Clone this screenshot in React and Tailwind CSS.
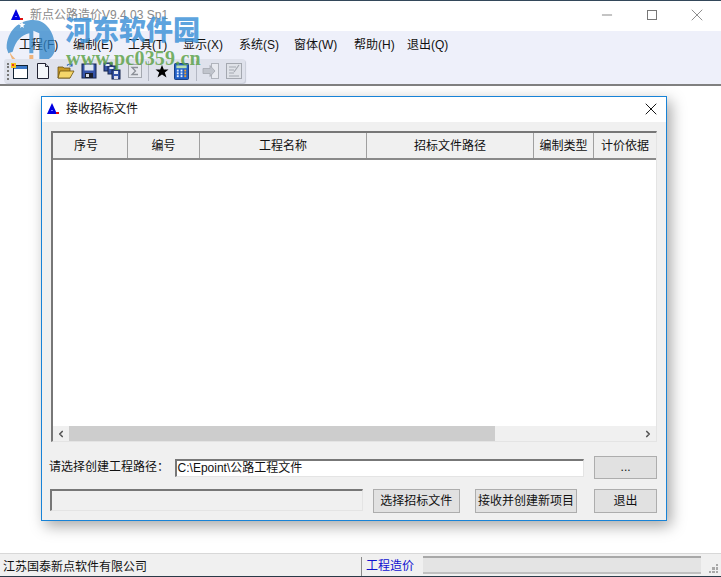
import React from "react";
import { X, Minus, ChevronLeft, ChevronRight } from "lucide-react";

const menus = ["工程(F)", "编制(E)", "工具(T)", "显示(X)", "系统(S)", "窗体(W)", "帮助(H)", "退出(Q)"];
const menuWidths = ["w-[54px]", "w-[55px]", "w-[55px]", "w-[56px]", "w-[55px]", "w-[60px]", "w-[53px]", "w-[50px]"];

const columns = [
  { title: "序号", width: "w-[75px] pr-[8px]" },
  { title: "编号", width: "w-[72px]" },
  { title: "工程名称", width: "w-[167px]" },
  { title: "招标文件路径", width: "w-[167px]" },
  { title: "编制类型", width: "w-[60px]" },
  { title: "计价依据", width: "flex-1" },
];

// App logo: the blue triangle with a small red dot
const AppIcon = ({ className }) => (
  <svg viewBox="0 0 14 14" className={className}>
    <polygon points="6,1 11,12 1,12" fill="#0000e0" />
    <rect x="10" y="10" width="3" height="2" fill="#e01010" />
    <rect x="5" y="8" width="2" height="1" fill="#8080ff" />
  </svg>
);

const NewProjectIcon = () => (
  <svg viewBox="0 0 18 18" className="w-[18px] h-[18px]">
    <rect x="2.500" y="3.500" width="14" height="13" fill="#fff" stroke="#123" />
    <rect x="3" y="4" width="13" height="3" fill="#3a78c8" />
    <rect x="0" y="1" width="5" height="5" fill="#f6c21c" />
    <rect x="1" y="2" width="2" height="2" fill="#e83a20" />
  </svg>
);

const PageIcon = () => (
  <svg viewBox="0 0 18 18" className="w-[18px] h-[18px]">
    <path d="M3.500 1.500h8l3 3v12h-11z" fill="#f4f6fa" stroke="#223" />
    <path d="M11.500 1.500v3h3" fill="#c8d0dc" stroke="#223" />
  </svg>
);

const FolderIcon = () => (
  <svg viewBox="0 0 18 18" className="w-[18px] h-[18px]">
    <path d="M1 5h5l1 1h6v10H1z" fill="#c89a28" stroke="#6b5210" strokeWidth="0.8" />
    <path d="M3 9h14l-4 7H1z" fill="#f5d66a" stroke="#6b5210" strokeWidth="0.8" />
    <path d="M10 3.500c2-2 4-2 5 0M15 1.500v2.500h-2.500" fill="none" stroke="#2a62b8" strokeWidth="1.200" />
  </svg>
);

const DiskIcon = () => (
  <svg viewBox="0 0 18 18" className="w-[18px] h-[18px]">
    <rect x="2" y="2" width="14" height="14" fill="#3554a8" stroke="#14244f" />
    <rect x="4.500" y="2.500" width="9" height="6" fill="#dfe6f2" />
    <rect x="5" y="11" width="8" height="5" fill="#1b1f2c" />
    <rect x="6" y="12" width="3" height="3" fill="#d6dbe6" />
  </svg>
);

const SaveAllIcon = () => (
  <svg viewBox="0 0 18 18" className="w-[18px] h-[18px]">
    <rect x="1" y="1" width="8" height="8" fill="#3554a8" stroke="#14244f" />
    <rect x="5" y="4" width="8" height="8" fill="#3554a8" stroke="#14244f" />
    <rect x="9" y="8" width="8" height="9" fill="#3554a8" stroke="#14244f" />
    <rect x="11" y="9" width="4" height="3" fill="#e6ebf5" />
    <rect x="11" y="14" width="4" height="3" fill="#dde" />
    <rect x="6.500" y="5" width="4" height="2" fill="#e6ebf5" />
    <rect x="2.500" y="2" width="4" height="2" fill="#e6ebf5" />
  </svg>
);

const SigmaIcon = () => (
  <svg viewBox="0 0 18 18" className="w-[18px] h-[18px]">
    <rect x="2.500" y="2.500" width="13" height="13" fill="#e6e8ee" stroke="#a4a8b0" />
    <path d="M12 5.500H6l3.500 3.500L6 12.500h6" fill="none" stroke="#8c9098" strokeWidth="1.300" />
  </svg>
);

const StarIcon = () => (
  <svg viewBox="0 0 18 18" className="w-[18px] h-[18px]">
    <polygon points="9,3 10.800,7.500 15.500,7.500 11.800,10.500 13.500,15.500 9,12.500 4.500,15.500 6.200,10.500 2.500,7.500 7.200,7.500" fill="#000" />
  </svg>
);

const CalcIcon = () => (
  <svg viewBox="0 0 16 18" className="w-[15px] h-[17px]">
    <rect x="0.500" y="0.500" width="15" height="17" rx="1" fill="#2060c8" stroke="#123a80" />
    <rect x="2.500" y="2.500" width="11" height="3" fill="#b8e0b0" />
    {[7, 10, 13].map((y) =>
      [3, 7, 11].map((x) => (
        <rect key={`${x}-${y}`} x={x} y={y} width="2" height="2" fill={x === 11 ? "#f0a030" : "#e8f0ff"} />
      ))
    )}
  </svg>
);

const ExportIcon = () => (
  <svg viewBox="0 0 18 18" className="w-[18px] h-[18px]">
    <rect x="9.500" y="1.500" width="7" height="15" fill="#e8eaf0" stroke="#b0b4bc" />
    <path d="M1 6.500h7V3.500l5 5.500-5 5.500v-3H1z" fill="#c0c4cc" stroke="#a4a8b0" strokeWidth="0.800" />
  </svg>
);

const ReportIcon = () => (
  <svg viewBox="0 0 18 18" className="w-[18px] h-[18px]">
    <rect x="1.500" y="1.500" width="15" height="15" fill="#dfe2e8" stroke="#a4a8b0" />
    <path d="M4 5h7M4 8h5M4 11h5M4 14h10M14 3L9 10" stroke="#a4a8b0" strokeWidth="1.200" fill="none" />
  </svg>
);

const ToolSep = ({ className }) => <div className={`w-px h-[20px] bg-[#b4b8c4] ${className}`} />;

const Toolbar = () => (
  <div className="flex items-center h-[24px] w-[241px] ml-[4px] rounded-[3px] bg-[#dfe2ec] shadow-[1px_1px_1px_#c8ccd8]">
    <div className="w-[3px] h-[17px] ml-[3px] mr-[1px] border-l-2 border-dotted border-[#777]" />
    <div className="flex items-center gap-[5px]">
      <NewProjectIcon />
      <PageIcon />
      <FolderIcon />
      <DiskIcon />
      <SaveAllIcon />
      <SigmaIcon />
    </div>
    <ToolSep className="ml-[4px]" />
    <div className="flex items-center gap-[3px] ml-[4px]">
      <StarIcon />
      <CalcIcon />
    </div>
    <ToolSep className="ml-[7px]" />
    <div className="flex items-center gap-[5px] ml-[5px]">
      <ExportIcon />
      <ReportIcon />
    </div>
  </div>
);

const WinButton = ({ className, children }) => (
  <button className={`flex items-center justify-center border border-[#adadad] bg-[#e1e1e1] text-[12px] text-[#111] ${className}`}>
    {children}
  </button>
);

// Sunken edge used by the table, the text box and the progress panel
const sunken = "border border-t-2 border-l-2 border-t-[#777] border-l-[#777] border-r-[#e4e4e4] border-b-[#e4e4e4]";

const Dialog = () => (
  <div className="w-[626px] h-[425px] ml-[41px] mt-[10px] border border-[#1883d7] bg-[#f0f0f0] shadow-[4px_5px_14px_rgba(0,0,0,0.35)] flex flex-col">
    <div className="h-[25px] shrink-0 bg-white flex items-center pl-[4px] pr-[5px] pb-[2px]">
      <AppIcon className="w-[14px] h-[14px]" />
      <span className="ml-[6px] text-[12px] text-[#111]">接收招标文件</span>
      <X className="ml-auto w-[20px] h-[20px] text-black" strokeWidth={1.1} />
    </div>

    <div className="flex-1 px-[9px] flex flex-col">
      <div className={`w-[606px] h-[311px] mt-[9px] flex flex-col bg-white ${sunken}`}>
        <div className="flex h-[27px] shrink-0 bg-[#f0f0f0] border-b-2 border-[#8a8a8a]">
          {columns.map((col) => (
            <div key={col.title} className={`${col.width} flex items-center justify-center border-r border-[#a0a0a0] last:border-r-0 text-[12px] text-[#111] leading-none`}>
              {col.title}
            </div>
          ))}
        </div>
        <div className="flex-1" />
        <div className="h-[15px] flex items-center bg-[#f0f0f0]">
          <div className="w-[16px] flex justify-center">
            <ChevronLeft className="w-[10px] h-[10px] text-[#555]" strokeWidth={4} />
          </div>
          <div className="w-[426px] h-full bg-[#cdcdcd]" />
          <div className="ml-auto w-[16px] flex justify-center">
            <ChevronRight className="w-[10px] h-[10px] text-[#555]" strokeWidth={4} />
          </div>
        </div>
      </div>

      <div className="flex items-center mt-[14px] h-[23px]">
        <span className="w-[125px] -ml-[2px] mr-[1px] pb-[2px] text-[12px] text-[#111] whitespace-nowrap">请选择创建工程路径：</span>
        <div className={`w-[411px] h-[18px] bg-white flex items-center pl-[1px] text-[12px] text-[#111] leading-none ${sunken}`}>
          C:\Epoint\公路工程文件
        </div>
        <WinButton className="w-[63px] h-[23px] ml-[10px] pb-[2px]">...</WinButton>
      </div>

      <div className="flex items-center mt-[10px] h-[24px]">
        <div className={`w-[314px] h-[22px] -ml-px self-start bg-[#f0f0f0] ${sunken}`} />
        <WinButton className="w-[87px] h-[24px] ml-[10px]">选择招标文件</WinButton>
        <WinButton className="w-[103px] h-[24px] ml-[15px] whitespace-nowrap">接收并创建新项目</WinButton>
        <WinButton className="w-[63px] h-[24px] ml-[17px]">退出</WinButton>
      </div>
    </div>
  </div>
);

const StatusBar = () => (
  <div className="h-[23px] shrink-0 bg-[#f0f0f0] border-t border-[#d8d8d8] flex items-center">
    <span className="w-[362px] pl-[3px] text-[12px] text-[#111] border-r border-[#8a8a8a] h-[19px] self-end flex items-center">江苏国泰新点软件有限公司</span>
    <span className="ml-[4px] mt-[1px] text-[12px] text-[#1010d0]">工程造价</span>
    <div className="ml-[9px] w-[278px] h-[18px] bg-[#e4e4e4] border-t-2 border-[#a8a8a8] border-b-2 border-b-[#c0c0c0]" />
    <div className="ml-auto mr-[3px] self-end mb-[3px] w-[9px] h-[9px] grid grid-cols-3 gap-px">
      {[0, 0, 1, 0, 1, 1, 1, 1, 1].map((on, i) => (
        <div key={i} className={on ? "bg-[#a8a8a8]" : ""} />
      ))}
    </div>
  </div>
);

// Site stamp sitting on top of the window's corner
const Watermark = () => (
  <div className="absolute left-0 top-[10px] w-[215px] h-[70px] pointer-events-none">
    <svg viewBox="0 0 210 147" className="absolute left-0 top-0 w-[70px] h-[49px]">
      <path d="M20 115C20 60 60 30 100 30C140 30 165 70 165 115C165 130 155 145 140 150L118 150L118 70L100 62L100 130L88 130L88 70C65 75 48 90 38 125L25 130Z" fill="#2f86c9" opacity="0.75" />
      <path d="M28 125C40 170 70 195 95 195C125 195 145 170 150 150L118 150L118 165L100 165L100 135L88 135L88 175C65 165 45 150 28 125Z" fill="#f0a050" opacity="0.75" />
      <polygon points="66,34 69,41 76,42 70,47 72,54 66,50 60,54 62,47 56,42 63,41" fill="#fff" />
    </svg>
    <div className="absolute left-[65px] top-[2px] text-[27px] font-black text-[#3f93d8]/85 whitespace-nowrap leading-[34px] [font-family:'Noto_Sans_CJK_SC',sans-serif]">
      河东软件园
    </div>
    <div className="absolute left-[66px] top-[37px] text-[20px] tracking-[0.2px] font-bold text-[#5fa34a]/85 whitespace-nowrap leading-[22px] [font-family:'Liberation_Serif',serif]">
      www.pc0359.cn
    </div>
  </div>
);

const App = () => (
  <div className="relative w-[721px] h-[577px] overflow-hidden bg-white flex flex-col [font-family:'Liberation_Sans','Noto_Sans_CJK_SC',sans-serif] border-b border-[#2a3a48]">
    <div className="h-[31px] shrink-0 bg-white border-t border-[#33475a] flex items-center pb-[2px]">
      <AppIcon className="w-[14px] h-[14px] ml-[10px]" />
      <span className="ml-[6px] text-[12px] text-[#8a8a8a] leading-none">新点公路造价V9.4.03 Sp1</span>
      <Minus className="ml-auto w-[16px] h-[16px] text-[#777]" strokeWidth={1.3} />
      <div className="ml-[32px] w-[10px] h-[10px] border border-[#777]" />
      <X className="ml-[30px] mr-[14px] w-[20px] h-[20px] text-[#777]" strokeWidth={1} />
    </div>

    <div className="h-[55px] shrink-0 bg-[#eef0fa] border-b-2 border-[#808080]">
      <div className="flex h-[28px] items-center pl-[19px] text-[12px] text-[#111]">
        {menus.map((m, i) => (
          <span key={m} className={menuWidths[i]}>{m}</span>
        ))}
      </div>
      <Toolbar />
    </div>

    <div className="flex-1 bg-white">
      <Dialog />
    </div>

    <StatusBar />
    <Watermark />
  </div>
);

export default App;
